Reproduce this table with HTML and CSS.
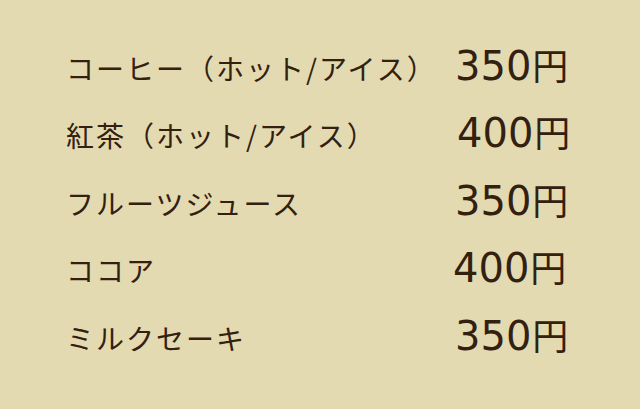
FILE: index.html
```html
<!DOCTYPE html>
<html lang="ja">
<head>
<meta charset="utf-8">
<link rel="stylesheet" href="styles.css">
</head>
<body>
<ul class="menu">
  <li class="item"><span class="name">コーヒー（ホット/アイス）</span><span class="price">350<span class="yen">円</span></span></li>
  <li class="item"><span class="name">紅茶（ホット/アイス）</span><span class="price shift-r">400<span class="yen">円</span></span></li>
  <li class="item"><span class="name">フルーツジュース</span><span class="price">350<span class="yen">円</span></span></li>
  <li class="item"><span class="name">ココア</span><span class="price shift-l">400<span class="yen">円</span></span></li>
  <li class="item"><span class="name">ミルクセーキ</span><span class="price">350<span class="yen">円</span></span></li>
</ul>
</body>
</html>
```
FILE: styles.css
```css
html, body {
  margin: 0;
  padding: 0;
  background: #e3dab2;
  height: 100%;
}
body {
  font-family: "Noto Sans CJK JP", "Noto Sans", sans-serif;
  color: #33200f;
}
.menu {
  list-style: none;
  margin: 0;
  padding: 34px 0 0 66px;
  display: flex;
  flex-direction: column;
}
.item {
  display: grid;
  grid-template-columns: 389px auto;
  align-items: center;
  height: 67.5px;
}
.name {
  font-size: 28px;
  line-height: 1;
  letter-spacing: 2px;
  text-spacing-trim: space-all;
}
.price {
  font-family: "DejaVu Sans", "Noto Sans CJK JP", sans-serif;
  font-size: 40px;
  line-height: 1;
  margin-top: -4px;
}
.yen {
  font-family: "Noto Sans CJK JP", sans-serif;
  font-size: 36px;
  margin-left: 1px;
}
.shift-r { margin-left: 2px; }
.shift-l { margin-left: -2px; }
```
